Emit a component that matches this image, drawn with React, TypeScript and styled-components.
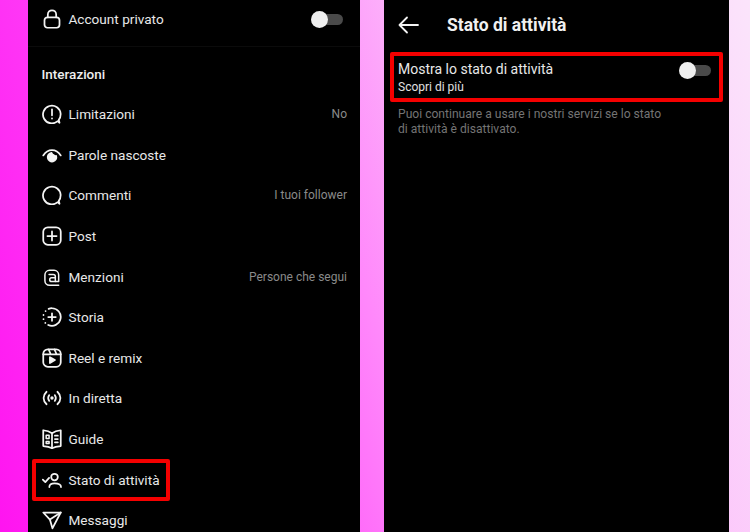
import { ReactNode } from 'react';
import styled, { createGlobalStyle } from 'styled-components';

const GlobalStyle = createGlobalStyle`
  html, body {
    margin: 0;
    padding: 0;
    background: #ff40f5;
  }
  * {
    box-sizing: border-box;
  }
`;

const Page = styled.div`
  display: flex;
  width: 750px;
  height: 532px;
  padding-left: 28px;
  gap: 24px;
  overflow: hidden;
  font-family: Roboto, 'Liberation Sans', sans-serif;
  background: linear-gradient(72deg, #ff14f0 0%, #ff38f6 22%, #ff88fb 48%, #fcb4fa 62%, #fbe4fb 100%);
`;

const Phone = styled.div<{ $width: number }>`
  flex: none;
  width: ${(p) => p.$width}px;
  height: 532px;
  background: #000;
  color: #f2f2f2;
  overflow: hidden;
`;

const AccountBlock = styled.div`
  height: 47px;
  padding: 0 17px 8px 14px;
  display: flex;
  align-items: center;
  border-bottom: 1px solid #0b0b0b;
`;

const SectionTitle = styled.div`
  height: 47px;
  padding: 19.5px 0 0 13.5px;
  font-size: 13.5px;
  line-height: 15px;
  font-weight: 500;
  color: #eee;
`;

const Row = styled.div`
  position: relative;
  height: 40.6px;
  padding: 0 13px 0 14px;
  display: flex;
  align-items: center;
`;

const IconSlot = styled.span`
  flex: none;
  width: 20px;
  height: 20px;
  margin-right: 6.5px;
  color: #f4f4f4;
  svg {
    display: block;
    width: 20px;
    height: 20px;
    fill: none;
    stroke: currentColor;
    stroke-width: 2.1;
    stroke-linecap: round;
    stroke-linejoin: round;
  }
`;

const Label = styled.span`
  flex: 1;
  font-size: 13.6px;
  line-height: 16px;
  color: #e8e8e8;
`;

const Value = styled.span`
  font-size: 12px;
  line-height: 16px;
  color: #8a8a8a;
`;

const Highlight = styled.span<{ $inset: string }>`
  position: absolute;
  inset: ${(p) => p.$inset};
  border: 4px solid #f50000;
  border-radius: 2px;
  pointer-events: none;
`;

const Toggle = styled.span`
  position: relative;
  flex: none;
  display: block;
  width: 32px;
  height: 17px;
  &::before {
    content: '';
    position: absolute;
    right: 0;
    top: 3px;
    width: 24px;
    height: 11px;
    border-radius: 6px;
    background: #4a4a4a;
  }
  &::after {
    content: '';
    position: absolute;
    left: 0;
    top: 0;
    width: 17px;
    height: 17px;
    border-radius: 50%;
    background: #efefef;
  }
`;

const Header = styled.div`
  height: 50px;
  padding-left: 14px;
  display: flex;
  align-items: center;
`;

const BackIcon = styled.svg`
  flex: none;
  width: 21px;
  height: 18px;
  margin-right: 28px;
  fill: none;
  stroke: #f4f4f4;
  stroke-width: 1.8;
  stroke-linecap: round;
  stroke-linejoin: round;
`;

const Title = styled.div`
  font-size: 17.5px;
  line-height: 20px;
  font-weight: 700;
  color: #f0f0f0;
`;

const StatusRow = styled.div`
  position: relative;
  height: 54px;
  padding: 11px 18px 0 14px;
  display: flex;
  justify-content: space-between;
`;

const StatusText = styled.div`
  display: flex;
  flex-direction: column;
  gap: 2px;
`;

const StatusLabel = styled.div`
  font-size: 14px;
  line-height: 17px;
  color: #e8e8e8;
`;

const StatusLink = styled.div`
  font-size: 12px;
  line-height: 14px;
  color: #e0e0e0;
`;

const StatusToggle = styled.div`
  padding-top: 1px;
`;

const Note = styled.p`
  margin: 3px 0 0;
  padding: 0 14px;
  width: 300px;
  font-size: 12.1px;
  line-height: 15px;
  color: #747474;
`;

const LockIcon = () => (
  <svg viewBox="0 0 24 24">
    <rect x="3" y="10" width="18" height="12.500" rx="3.500" />
    <path d="M7 10V6.500a5 5 0 0 1 10 0V10" />
  </svg>
);

const LimitIcon = () => (
  <svg viewBox="0 0 24 24">
    <path d="M21 22.500l-2.200-1.900A10.600 10.600 0 1 1 22.400 12c0 3-.9 5.300-2.300 7z" />
    <path d="M12 6.500v7" />
    <path d="M12 17.200v.2" />
  </svg>
);

const EyeIcon = () => (
  <svg viewBox="0 0 24 24">
    <path d="M1.500 12.500C4 8.500 7.500 6 12 6s8 2.500 10.500 6.500" />
    <path
      d="M11.500 9.500a4 4 0 0 0 2.500 2.600 2.600 2.600 0 0 0 3 1 5.200 5.200 0 1 1-5.500-3.600z"
      fill="currentColor"
    />
  </svg>
);

const CommentIcon = () => (
  <svg viewBox="0 0 24 24">
    <path d="M21 22.500l-2.200-1.900A10.600 10.600 0 1 1 22.400 12c0 3-.9 5.300-2.300 7z" />
  </svg>
);

const PostIcon = () => (
  <svg viewBox="0 0 24 24">
    <rect x="1.500" y="1.500" width="21" height="21" rx="5.500" />
    <path d="M12 6.500v11M6.500 12h11" />
  </svg>
);

const MentionIcon = () => (
  <svg viewBox="0 0 24 24">
    <g strokeWidth="1.800">
      <path d="M20 22H9a5.500 5.500 0 0 1-5.500-5.500v-7A5.500 5.500 0 0 1 9 4h5.500A5.500 5.500 0 0 1 20 9.500v8h-4V11.500A2.500 2.500 0 0 0 13.500 9h-5" />
      <path d="M16 13h-4.500a2.200 2.200 0 0 0 0 4.500H16" />
    </g>
  </svg>
);

const StoryIcon = () => (
  <svg viewBox="0 0 24 24">
    <path d="M8 2.200A10.500 10.500 0 0 1 12 1.500a10.500 10.500 0 1 1-4.500 20" />
    <path d="M4.300 4.800v.1M1.800 9.500v.1M1.800 14.500v.1M4 19v.1" />
    <path d="M12 7.500v9M7.500 12h9" />
  </svg>
);

const ReelIcon = () => (
  <svg viewBox="0 0 24 24">
    <rect x="1.500" y="1.500" width="21" height="21" rx="5.500" />
    <path d="M1.500 7.500h21M8 1.800l2.500 5.700M15 1.800l2.500 5.700" />
    <path d="M9.500 11l6 3.500-6 3.500z" fill="currentColor" />
  </svg>
);

const LiveIcon = () => (
  <svg viewBox="0 0 24 24">
    <path d="M5.500 4.500c-4.800 4.500-4.800 10.500 0 15M18.500 4.500c4.800 4.500 4.800 10.500 0 15" />
    <path d="M8.700 8.500c-1.500 2-1.500 5 0 7M15.300 8.500c1.500 2 1.500 5 0 7" />
    <circle cx="12" cy="12" r="1" fill="currentColor" />
  </svg>
);

const GuideIcon = () => (
  <svg viewBox="0 0 24 24">
    <path d="M12 5C9 3 5.500 2 1.500 1.500v19c4 .4 7.500 1 10.500 2.500 3-1.500 6.500-2.100 10.500-2.500v-19C18.500 2 15 3 12 5z" />
    <path d="M12 5v18" />
    <path d="M5 7.500h3.500v4H5zM5 15h3.500v2.500H5z" strokeWidth="1.800" />
    <path d="M15.500 8h3.500M15.500 12h3.500M15.500 16h3.500" />
  </svg>
);

const ActivityIcon = () => (
  <svg viewBox="0 0 24 24">
    <circle cx="15" cy="8.500" r="4" />
    <path d="M8.800 20.500c0-3 2.200-4.500 6.200-4.500s7.800 1.500 7.800 4.500" />
    <path d="M1 11.500l3 3 4.500-5" />
  </svg>
);

const SendIcon = () => (
  <svg viewBox="0 0 24 24">
    <path d="M22.500 3H1.500l8 8.500L12.500 22z" />
    <path d="M9.500 11.500L22.500 3" />
  </svg>
);

interface Interaction {
  label: string;
  icon: ReactNode;
  value?: string;
  marked?: boolean;
}

const interactions: Interaction[] = [
  { label: 'Limitazioni', icon: <LimitIcon />, value: 'No' },
  { label: 'Parole nascoste', icon: <EyeIcon /> },
  { label: 'Commenti', icon: <CommentIcon />, value: 'I tuoi follower' },
  { label: 'Post', icon: <PostIcon /> },
  { label: 'Menzioni', icon: <MentionIcon />, value: 'Persone che segui' },
  { label: 'Storia', icon: <StoryIcon /> },
  { label: 'Reel e remix', icon: <ReelIcon /> },
  { label: 'In diretta', icon: <LiveIcon /> },
  { label: 'Guide', icon: <GuideIcon /> },
  { label: 'Stato di attività', icon: <ActivityIcon />, marked: true },
  { label: 'Messaggi', icon: <SendIcon /> },
];

export default function App() {
  return (
    <>
      <GlobalStyle />
      <Page>
        <Phone $width={332}>
          <AccountBlock>
            <IconSlot>
              <LockIcon />
            </IconSlot>
            <Label>Account privato</Label>
            <Toggle />
          </AccountBlock>
          <SectionTitle>Interazioni</SectionTitle>
          {interactions.map((item) => (
            <Row key={item.label}>
              <IconSlot>{item.icon}</IconSlot>
              <Label>{item.label}</Label>
              {item.value && <Value>{item.value}</Value>}
              {item.marked && <Highlight $inset="0 190px -1px 4px" />}
            </Row>
          ))}
        </Phone>
        <Phone $width={345}>
          <Header>
            <BackIcon viewBox="0 0 21 18">
              <path d="M20 9H1.500M9 1.500L1.500 9 9 16.500" />
            </BackIcon>
            <Title>Stato di attività</Title>
          </Header>
          <StatusRow>
            <StatusText>
              <StatusLabel>Mostra lo stato di attività</StatusLabel>
              <StatusLink>Scopri di più</StatusLink>
            </StatusText>
            <StatusToggle>
              <Toggle />
            </StatusToggle>
            <Highlight $inset="2px 6px 2px 6px" />
          </StatusRow>
          <Note>Puoi continuare a usare i nostri servizi se lo stato di attività è disattivato.</Note>
        </Phone>
      </Page>
    </>
  );
}
